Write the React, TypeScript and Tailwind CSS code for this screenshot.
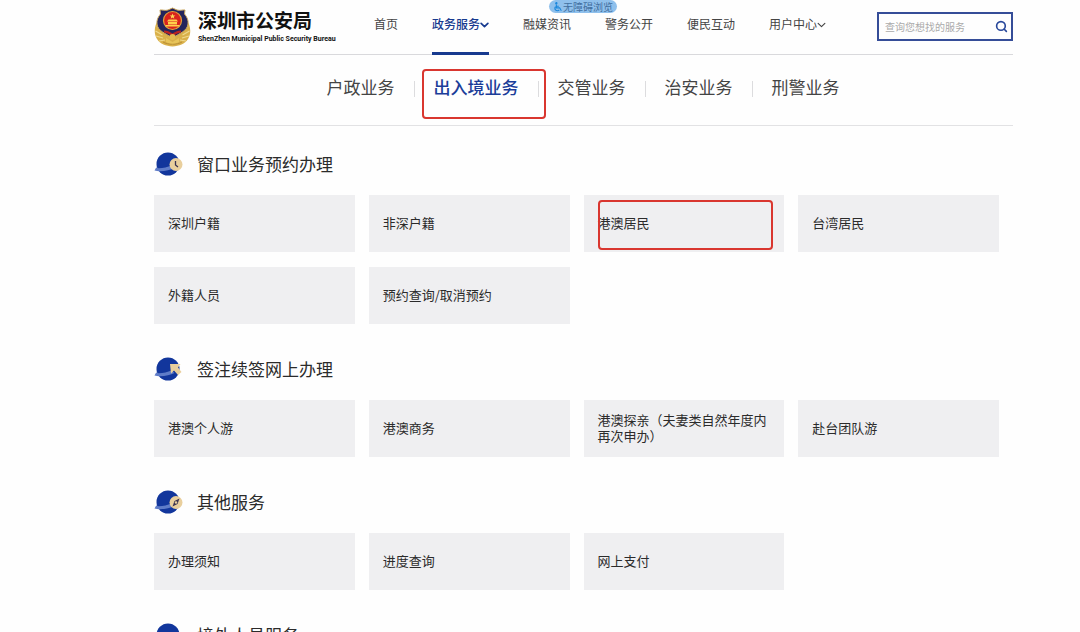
import type { ReactNode } from "react";
import { ChevronDown, Search } from "lucide-react";

interface NavItem {
  label: string;
  active?: boolean;
  dropdown?: boolean;
}

interface Service {
  label: string;
  marked?: boolean;
}

interface ServiceSection {
  title: string;
  icon: ReactNode;
  services: Service[];
}

const navItems: NavItem[] = [
  { label: "首页" },
  { label: "政务服务", active: true, dropdown: true },
  { label: "融媒资讯" },
  { label: "警务公开" },
  { label: "便民互动" },
  { label: "用户中心", dropdown: true },
];

const tabs = ["户政业务", "出入境业务", "交管业务", "治安业务", "刑警业务"];
const activeTab = "出入境业务";

const sections: ServiceSection[] = [
  {
    title: "窗口业务预约办理",
    icon: (
      <>
        <circle cx="22" cy="12.500" r="6.500" fill="#e9cf9d" />
        <path d="M21.500 9v4l2.500 2" fill="none" stroke="#3b3350" strokeWidth="1.300" />
      </>
    ),
    services: [
      { label: "深圳户籍" },
      { label: "非深户籍" },
      { label: "港澳居民", marked: true },
      { label: "台湾居民" },
      { label: "外籍人员" },
      { label: "预约查询/取消预约" },
    ],
  },
  {
    title: "签注续签网上办理",
    icon: <path d="M16 7h10.500L24 10.500l3.500 4.500-3.500 3-4-4.500-3 3z" fill="#e9cf9d" />,
    services: [
      { label: "港澳个人游" },
      { label: "港澳商务" },
      { label: "港澳探亲（夫妻类自然年度内再次申办）" },
      { label: "赴台团队游" },
    ],
  },
  {
    title: "其他服务",
    icon: (
      <>
        <circle cx="22" cy="12.500" r="6.500" fill="#e9cf9d" />
        <path d="M25.500 8.500l-2 5.500-5 2.500 2-5.500z" fill="#3b3350" />
        <circle cx="22" cy="12.500" r="1.200" fill="#e9cf9d" />
      </>
    ),
    services: [{ label: "办理须知" }, { label: "进度查询" }, { label: "网上支付" }],
  },
  {
    title: "境外人员服务",
    icon: <circle cx="22" cy="14" r="5" fill="#e9cf9d" />,
    services: [],
  },
];

function PoliceEmblem() {
  return (
    <svg viewBox="0 0 37 40" className="h-10 w-[37px] shrink-0" aria-hidden="true">
      <path
        d="M5 12C0 18-.5 27 3 32c3 5 9 7 15.500 7.500C25 39 31 37 34 32c3.500-5 3-14-2-20l-4 9-9.500 7L9 21z"
        fill="#d9b04a"
      />
      <path
        d="M3 19l6 5M1.500 24l7 4M2 29l7 2M5 34l6-1M34 19l-6 5M35.500 24l-7 4M35 29l-7 2M32 34l-6-1"
        fill="none"
        stroke="#efd98c"
        strokeWidth="1.200"
      />
      <path
        d="M18.500 1l4.500 2c3 1 6-.5 8 0l-.5 4c2.500 3 4 6 3.500 10-.8 7-8 9-15.500 14C11 26 3.800 24 3 17c-.5-4 1-7 3.500-10L6 3c2-.5 5 1 8 0z"
        fill="#24255c"
        stroke="#c9a55c"
        strokeWidth="1"
      />
      <circle cx="18.500" cy="13.500" r="9" fill="#d9231d" stroke="#e4a13a" strokeWidth="1.200" />
      <path d="M18.500 6.500l.8 2h2.100l-1.700 1.300.6 2-1.800-1.200-1.800 1.200.6-2-1.700-1.300h2.100z" fill="#ffd957" />
      <path d="M13 14.500h11l-1.500-2h-8zM14 15h9v2.500h-9zM11.500 18h14v1.500h-14z" fill="#ffd04a" />
      <path d="M10 23.500c3 0 5.500 1 8.500 3 3-2 5.500-3 8.500-3v2c-3 .5-5.500 1.500-8.500 4-3-2.500-5.500-3.500-8.500-4z" fill="#bc2320" />
      <path d="M12 31l6.500 4 6.500-4v4l-6.500 3-6.500-3z" fill="#e7c45a" />
      <circle cx="18.500" cy="30" r="3" fill="#e4bd50" />
      <path d="M9 35c5 3 14 3 19 0" fill="none" stroke="#b98f34" strokeWidth="1" />
    </svg>
  );
}

function SectionIcon({ children }: { children: ReactNode }) {
  return (
    <svg viewBox="0 0 30 24" className="h-6 w-[30px] shrink-0" aria-hidden="true">
      <circle cx="14" cy="12" r="11.500" fill="#12369c" />
      <path d="M3 14L.5 18.500c5 1.500 15 .5 20-2.500l-3-2.500C13 15.500 7 16.500 2.500 16z" fill="#5f7cc8" />
      {children}
    </svg>
  );
}

function SiteHeader() {
  return (
    <header className="relative flex h-[55px] items-start border-b border-[#d9d9dc]">
      <a href="#home" className="mt-[7px] flex w-[220px] shrink-0 items-start gap-[7px]">
        <PoliceEmblem />
        <span className="whitespace-nowrap pt-px text-[#111]">
          <span className="block text-[19px] font-bold leading-6">深圳市公安局</span>
          <span className="block font-['Roboto',sans-serif] text-[7px] font-bold leading-[14px]">
            ShenZhen Municipal Public Security Bureau
          </span>
        </span>
      </a>

      <nav className="flex h-[55px] gap-[34px] text-xs text-[#444]">
        {navItems.map((item) => (
          <a
            key={item.label}
            href="#nav"
            className={
              item.active
                ? "flex h-full items-start whitespace-nowrap border-b-[3px] border-[#173a8f] pt-4 font-medium text-[#173a8f]"
                : "flex h-full items-start whitespace-nowrap pt-4"
            }
          >
            {item.label}
            {item.dropdown ? (
              <ChevronDown
                viewBox="4 4 16 16"
                className="mt-1 h-2.5 w-[9px]"
                strokeWidth={item.active ? 3 : 2}
              />
            ) : null}
          </a>
        ))}
      </nav>

      <a
        href="#accessible"
        className="absolute left-[395px] top-0 flex h-[13px] items-center whitespace-nowrap rounded-full bg-[#8fc0ec] px-1 text-[10px] leading-3 text-[#426f9f]"
      >
        <svg viewBox="0 0 12 12" className="h-2.5 w-2.5" fill="none" stroke="#1b87dc" strokeWidth="1.300">
          <circle cx="4" cy="1.500" r=".8" fill="#1b87dc" />
          <path d="M4 3v4h4l2 3.500M4 5h3M3 5.500a3 3 0 1 0 4.500 4" />
        </svg>
        无障碍浏览
      </a>

      <form
        role="search"
        className="ml-auto mt-3 flex h-[29px] w-[136px] shrink-0 items-center border-2 border-[#354d98]"
      >
        <input
          type="text"
          aria-label="查询服务"
          placeholder="查询您想找的服务"
          className="min-w-0 flex-1 bg-transparent pl-1.5 text-[10px] outline-none placeholder:text-[#aaa]"
        />
        <button type="button" aria-label="搜索" className="px-[3px] text-[#27479a]">
          <Search size={13} strokeWidth={3} />
        </button>
      </form>
    </header>
  );
}

function BusinessTabs() {
  return (
    <nav className="flex h-[71px] justify-center border-b border-[#e2e2e4] pr-px pt-5 text-[17px] leading-6 text-[#444]">
      {tabs.map((tab) => (
        <div key={tab} className="group relative flex items-start">
          <a
            href="#tab"
            className={tab === activeTab ? "px-[19px] font-medium text-[#1b3d99]" : "px-[19px]"}
          >
            {tab}
          </a>
          <span className="mt-1.5 h-4 w-px bg-[#dcdcde] group-last:hidden" />
          {tab === activeTab ? (
            <span className="pointer-events-none absolute -right-[7px] -top-1.5 left-[7px] h-[50px] rounded-sm border-2 border-[#d9362f]" />
          ) : null}
        </div>
      ))}
    </nav>
  );
}

function ServiceCard({ service }: { service: Service }) {
  return (
    <a
      href="#service"
      className="relative flex h-[57px] items-center bg-[#efeff1] px-3.5 pb-0.5 text-[13px] leading-4 text-[#2b2b2b]"
    >
      {service.label}
      {service.marked ? (
        <span className="pointer-events-none absolute bottom-0.5 left-3.5 right-[11px] top-[5px] rounded-sm border-2 border-[#d9362f]" />
      ) : null}
    </a>
  );
}

export default function App() {
  return (
    <div className="min-h-screen bg-[#fefefe] pl-[154px] pr-[67px] font-['Noto_Sans_CJK_SC',sans-serif]">
      <SiteHeader />
      <BusinessTabs />
      <main className="pt-[26px]">
        {sections.map((section) => (
          <section key={section.title}>
            <h2 className="mb-[19px] flex h-6 items-center gap-[13px] text-[17px] leading-6 text-[#2b2b2b]">
              <SectionIcon>{section.icon}</SectionIcon>
              {section.title}
            </h2>
            <div className="grid grid-cols-4 gap-x-3.5 gap-y-[15px] pb-[33px] pr-3.5">
              {section.services.map((service) => (
                <ServiceCard key={service.label} service={service} />
              ))}
            </div>
          </section>
        ))}
      </main>
    </div>
  );
}
